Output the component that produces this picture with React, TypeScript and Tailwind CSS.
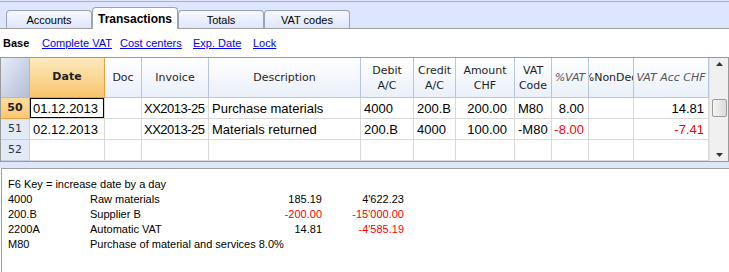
import React from 'react';

type Cell = { text?: string; align?: 'l' | 'r'; red?: boolean };

const headers: { lines: string[]; italic?: boolean }[] = [
  { lines: ['Doc'] },
  { lines: ['Invoice'] },
  { lines: ['Description'] },
  { lines: ['Debit', 'A/C'] },
  { lines: ['Credit', 'A/C'] },
  { lines: ['Amount', 'CHF'] },
  { lines: ['VAT', 'Code'] },
  { lines: ['%VAT'], italic: true },
  { lines: ['%NonDed'] },
  { lines: ['VAT Acc CHF'], italic: true },
];

const rows: { num: string; date: string; cells: Cell[] }[] = [
  {
    num: '50',
    date: '01.12.2013',
    cells: [
      {},
      { text: 'XX2013-25' },
      { text: 'Purchase materials' },
      { text: '4000' },
      { text: '200.B' },
      { text: '200.00', align: 'r' },
      { text: 'M80' },
      { text: '8.00', align: 'r' },
      {},
      { text: '14.81', align: 'r' },
    ],
  },
  {
    num: '51',
    date: '02.12.2013',
    cells: [
      {},
      { text: 'XX2013-25' },
      { text: 'Materials returned' },
      { text: '200.B' },
      { text: '4000' },
      { text: '100.00', align: 'r' },
      { text: '-M80' },
      { text: '-8.00', align: 'r', red: true },
      {},
      { text: '-7.41', align: 'r', red: true },
    ],
  },
  { num: '52', date: '', cells: Array.from({ length: 10 }, () => ({})) },
];

const tabs = ['Accounts', 'Transactions', 'Totals', 'VAT codes'];

const info = [
  { code: '4000', name: 'Raw materials', amount: '185.19', balance: "4'622.23" },
  { code: '200.B', name: 'Supplier B', amount: '-200.00', balance: "-15'000.00", redA: true, redB: true },
  { code: '2200A', name: 'Automatic VAT', amount: '14.81', balance: "-4'585.19", redB: true },
];

const App: React.FC = () => {
  return (
    <div className="w-[729px] h-[272px] bg-white overflow-hidden flex flex-col font-['Liberation_Sans',Arial,sans-serif] text-[#000]">
      {/* tab bar */}
      <div className="h-[29px] shrink-0 bg-[#dee6fd] pt-px border-b border-[#a0a0a0]">
        <div className="h-full border-t border-[#a9b0c6] flex items-end pl-[6px]">
          {tabs.map((t) =>
            t === 'Transactions' ? (
              <div
                key={t}
                className="relative z-10 -mb-px w-[86px] h-[22px] bg-white border border-b-0 border-[#9aa3b3] rounded-t-[4px] flex items-center justify-center text-[12px] font-bold"
              >
                {t}
              </div>
            ) : (
              <div
                key={t}
                className="w-[86px] h-[18px] bg-linear-to-b from-[#f6f8fe] to-[#dfe6fb] border border-b-0 border-[#9aa3b3] rounded-t-[4px] flex items-center justify-center text-[11px] pt-px"
              >
                {t}
              </div>
            )
          )}
        </div>
      </div>

      {/* view bar */}
      <div className="h-[28px] shrink-0 flex items-center text-[11px]">
        <span className="w-[42px] pl-[3px] font-bold">Base</span>
        <a className="w-[78px] text-[#0000ee] underline">Complete VAT</a>
        <a className="w-[73px] text-[#0000ee] underline">Cost centers</a>
        <a className="w-[60px] text-[#0000ee] underline">Exp. Date</a>
        <a className="text-[#0000ee] underline">Lock</a>
      </div>

      {/* table */}
      <div className="h-[105px] shrink-0 border border-[#9a9a9a] flex">
        <div className="grid grid-cols-[29px_75px_37px_67px_152px_53px_42px_59px_37px_37px_45px_75px] grid-rows-[40px_21px_21px_21px] font-['DejaVu_Sans',sans-serif] text-[11px] text-[#1e1e1e]">
          <div className="bg-linear-to-br from-[#e6ecfa] to-[#b3bfd5] border-r border-b border-[#a9bbd3]" />
          <div className="bg-linear-to-b from-[#fdeabd] to-[#f8c46a] border-r border-b border-[#f0a03a] flex items-center justify-center font-bold">
            Date
          </div>
          {headers.map((h, i) => (
            <div
              key={i}
              className={`bg-linear-to-b from-white to-[#eaf0f9] border-r border-b border-[#b6c6dd] flex flex-col items-center justify-center overflow-hidden whitespace-nowrap leading-[15px] ${
                h.italic ? 'italic text-[#555]' : ''
              }`}
            >
              {h.lines.map((l) => (
                <span key={l}>{l}</span>
              ))}
            </div>
          ))}

          {rows.map((r) => (
            <React.Fragment key={r.num}>
              <div
                className={`border-r border-b flex items-center justify-center ${
                  r.num === '50'
                    ? 'bg-linear-to-b from-[#fddc9c] to-[#f9c874] border-[#f0a03a] font-bold'
                    : 'bg-[#e2eaf6] border-[#c4d0e2] text-[#333]'
                }`}
              >
                {r.num}
              </div>
              <div
                className={`border-r border-b border-[#d9d9d9] flex items-center pl-[3px] pt-px font-['Liberation_Sans',Arial,sans-serif] text-[13px] text-black ${
                  r.num === '50' ? 'shadow-[inset_0_0_0_1px_#000]' : ''
                }`}
              >
                {r.date}
              </div>
              {r.cells.map((c, i) => (
                <div
                  key={i}
                  className={`border-r border-b border-[#d9d9d9] flex items-center pt-px overflow-hidden whitespace-nowrap font-['Liberation_Sans',Arial,sans-serif] text-[13px] ${
                    c.align === 'r'
                      ? i === 5
                        ? 'justify-end pr-[7px]'
                        : 'justify-end pr-[4px]'
                      : i === 1
                        ? 'pl-[2px] tracking-[-0.5px]'
                        : 'pl-[3px]'
                  } ${c.red ? 'text-[#ff0000]' : 'text-black'}`}
                >
                  {c.text}
                </div>
              ))}
            </React.Fragment>
          ))}
        </div>

        {/* scrollbar */}
        <div className="w-[19px] bg-[#f0f0f0] border-l border-[#e2e2e2] flex flex-col items-center justify-between py-[4px]">
          <svg width="7" height="4" viewBox="0 0 7 4">
            <path d="M3.5 0 L7 4 L0 4 Z" fill="#333" />
          </svg>
          <div className="w-[15px] h-[18px] -mt-[4px] rounded-[2px] border border-[#9a9a9a] bg-linear-to-r from-[#f4f4f4] to-[#dcdcdc]" />
          <svg width="7" height="4" viewBox="0 0 7 4">
            <path d="M0 0 L7 0 L3.5 4 Z" fill="#333" />
          </svg>
        </div>
      </div>

      <div className="h-[6px] shrink-0 bg-[#dee6fd]" />

      {/* info panel */}
      <div className="flex-1 ml-px border-t border-l border-[#a0a0a0] pt-[8px] pl-[6px] text-[11px] leading-[15px]">
        <div>F6 Key = increase date by a day</div>
        <div className="grid grid-cols-[82px_160px_72px_82px]">
          {info.map((r) => (
            <React.Fragment key={r.code}>
              <div>{r.code}</div>
              <div>{r.name}</div>
              <div className={`text-right ${r.redA ? 'text-[#ff0000]' : ''}`}>{r.amount}</div>
              <div className={`text-right ${r.redB ? 'text-[#ff0000]' : ''}`}>{r.balance}</div>
            </React.Fragment>
          ))}
          <div>M80</div>
          <div className="col-span-3 whitespace-nowrap">Purchase of material and services 8.0%</div>
        </div>
      </div>
    </div>
  );
};

export default App;
